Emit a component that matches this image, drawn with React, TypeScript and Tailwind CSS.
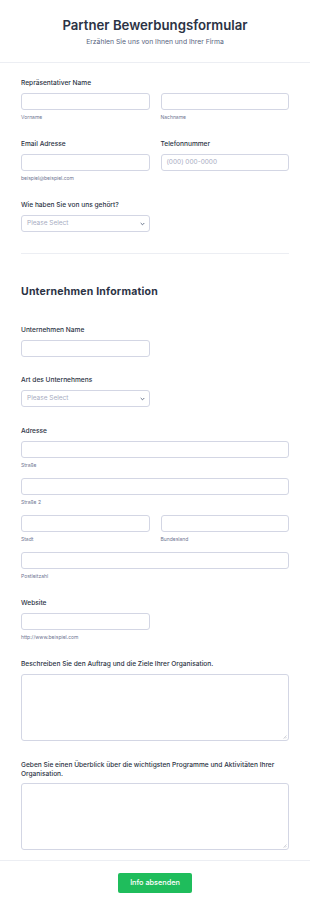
import React from "react";

const font = { fontFamily: "Inter, 'Noto Sans', sans-serif" };

function Label({
  children,
  className = "",
  tight = false,
}: {
  children: React.ReactNode;
  className?: string;
  tight?: boolean;
}) {
  return (
    <div
      className={
        "text-[6.6px] font-medium text-[#2c3345] " + (tight ? "leading-[8.5px] " : "leading-[12px] ") + className
      }
    >
      {children}
    </div>
  );
}

function Sub({ children }: { children: React.ReactNode }) {
  return <div className="mt-[2px] text-[5px] leading-[10px] text-[#6f7692]">{children}</div>;
}

function Input({ placeholder = "", className = "" }: { placeholder?: string; className?: string }) {
  return (
    <div
      className={
        "h-[17px] rounded-[3px] border border-[#d3d6e4] bg-white flex items-center px-[5px] text-[6.5px] text-[#a8acbf] " +
        className
      }
    >
      {placeholder}
    </div>
  );
}

function Select({ className = "" }: { className?: string }) {
  return (
    <div
      className={
        "h-[17px] w-[129px] rounded-[3px] border border-[#d3d6e4] bg-white flex items-center justify-between pl-[5px] pr-[4px] text-[6.5px] text-[#a8acbf] " +
        className
      }
    >
      <span>Please Select</span>
      <svg width="5" height="4" viewBox="0 0 5 4">
        <path d="M0.7 1 L2.5 2.8 L4.3 1" fill="none" stroke="#57647e" strokeWidth="0.9" />
      </svg>
    </div>
  );
}

function TextArea({ className = "" }: { className?: string }) {
  return (
    <div className={"relative h-[67px] rounded-[3px] border border-[#d3d6e4] bg-white " + className}>
      <svg className="absolute right-[1px] bottom-[1px]" width="4" height="4" viewBox="0 0 4 4">
        <path d="M3.5 0.5 L0.5 3.5 M3.5 2 L2 3.5" stroke="#b5b8c4" strokeWidth="0.6" />
      </svg>
    </div>
  );
}

export default function App() {
  return (
    <div style={font} className="w-[310px] h-[909px] bg-white overflow-hidden">
      <div className="h-[63px] border-b border-[#eceef3] flex flex-col items-center">
        <div className="mt-[15px] text-[13.2px] leading-[20px] font-semibold text-[#2c3345]">
          Partner Bewerbungsformular
        </div>
        <div className="mt-[2px] text-[6.8px] leading-[10px] text-[#57647e]">
          Erzählen Sie uns von Ihnen und Ihrer Firma
        </div>
      </div>

      <div className="px-[21px]">
        <Label className="mt-[14px]">Repräsentativer Name</Label>
        <div className="mt-[4px] grid grid-cols-2 gap-[11px]">
          <div>
            <Input />
            <Sub>Vorname</Sub>
          </div>
          <div>
            <Input />
            <Sub>Nachname</Sub>
          </div>
        </div>

        <div className="mt-[16px] grid grid-cols-2 gap-[11px]">
          <div>
            <Label>Email Adresse</Label>
            <Input className="mt-[4px]" />
            <Sub>beispiel@beispiel.com</Sub>
          </div>
          <div>
            <Label>Telefonnummer</Label>
            <Input className="mt-[4px]" placeholder="(000) 000-0000" />
          </div>
        </div>

        <Label className="mt-[16px]">Wie haben Sie von uns gehört?</Label>
        <Select className="mt-[4px]" />

        <div className="mt-[21px] border-t border-[#eceef3]" />

        <div className="mt-[30px] text-[10.5px] leading-[16px] font-bold text-[#2c3345] tracking-[0.2px]">
          Unternehmen Information
        </div>

        <Label className="mt-[24px]">Unternehmen Name</Label>
        <Input className="mt-[4px] w-[129px]" />

        <Label className="mt-[17px]">Art des Unternehmens</Label>
        <Select className="mt-[4px]" />

        <Label className="mt-[18px]">Adresse</Label>
        <Input className="mt-[4px]" />
        <Sub>Straße</Sub>
        <Input className="mt-[8px]" />
        <Sub>Straße 2</Sub>
        <div className="mt-[8px] grid grid-cols-2 gap-[11px]">
          <div>
            <Input />
            <Sub>Stadt</Sub>
          </div>
          <div>
            <Input />
            <Sub>Bundesland</Sub>
          </div>
        </div>
        <Input className="mt-[8px]" />
        <Sub>Postleitzahl</Sub>

        <Label className="mt-[16px]">Website</Label>
        <Input className="mt-[4px] w-[129px]" />
        <Sub>http://www.beispiel.com</Sub>

        <Label className="mt-[16px]">Beschreiben Sie den Auftrag und die Ziele Ihrer Organisation.</Label>
        <TextArea className="mt-[4px]" />

        <Label tight className="mt-[20px]">
          Geben Sie einen Überblick über die wichtigsten Programme und Aktivitäten Ihrer Organisation.
        </Label>
        <TextArea className="mt-[5px]" />
      </div>

      <div className="mt-[10px] border-t border-[#eceef3] flex justify-center">
        <div className="mt-[12px] h-[20px] w-[74px] rounded-[2px] bg-[#1fbd5c] flex items-center justify-center text-[7.3px] font-medium text-white">
          Info absenden
        </div>
      </div>
    </div>
  );
}
